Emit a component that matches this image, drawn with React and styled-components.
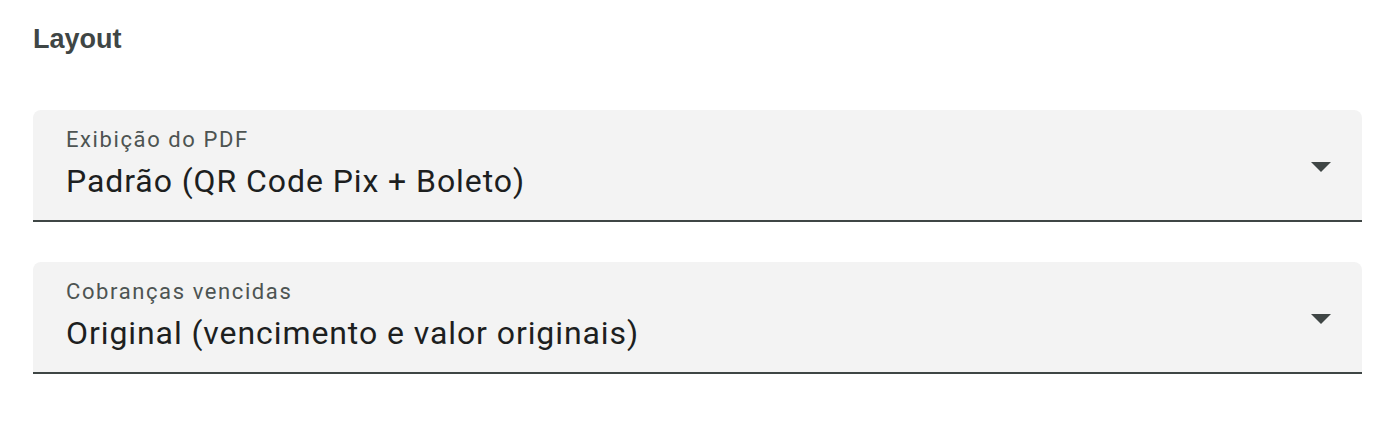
import React from "react";
import styled, { createGlobalStyle } from "styled-components";

const Global = createGlobalStyle`
  html, body { margin: 0; padding: 0; background: #ffffff; }
  body { font-family: Roboto, "Liberation Sans", sans-serif; }
`;

const Page = styled.div`
  width: 1396px;
  height: 424px;
  box-sizing: border-box;
  padding: 26px 34px 0 33px;
  display: flex;
  flex-direction: column;
`;

const Heading = styled.h2`
  margin: 0 0 57px 0;
  font-family: "Liberation Sans", Arial, sans-serif;
  font-size: 27px;
  line-height: 27px;
  font-weight: 700;
  color: #3f4645;
`;

const Fields = styled.div`
  display: flex;
  flex-direction: column;
  gap: 40px;
`;

const Field = styled.div`
  position: relative;
  height: 112px;
  box-sizing: border-box;
  background: #f3f3f3;
  border-radius: 8px 8px 0 0;
  border-bottom: 2px solid #3f4645;
  padding: 19px 80px 0 33px;
  display: flex;
  flex-direction: column;
`;

const Label = styled.div`
  font-size: 22px;
  line-height: 22px;
  color: #4d5452;
  letter-spacing: 1.6px;
`;

const Value = styled.div`
  margin-top: 14px;
  font-size: 32px;
  line-height: 32px;
  color: #1d1f1f;
  letter-spacing: 0.92px;
`;

const Arrow = styled.svg`
  position: absolute;
  right: 17px;
  top: 32px;
  width: 48px;
  height: 48px;
  fill: #3f4645;
`;

function Select({ label, value }) {
  return (
    <Field>
      <Label>{label}</Label>
      <Value>{value}</Value>
      <Arrow viewBox="0 0 24 24">
        <path d="M7 10l5 5 5-5z" />
      </Arrow>
    </Field>
  );
}

export default function App() {
  return (
    <>
      <Global />
      <Page>
        <Heading>Layout</Heading>
        <Fields>
          <Select label="Exibição do PDF" value="Padrão (QR Code Pix + Boleto)" />
          <Select label="Cobranças vencidas" value="Original (vencimento e valor originais)" />
        </Fields>
      </Page>
    </>
  );
}
